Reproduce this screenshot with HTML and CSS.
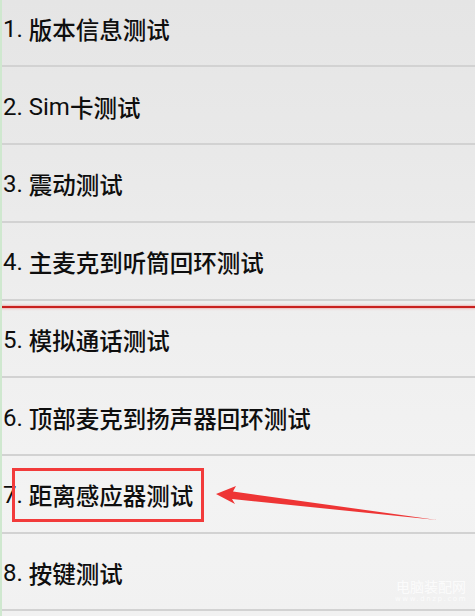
FILE: index.html
```html
<!DOCTYPE html>
<html lang="zh">
<head>
<meta charset="utf-8">
<title>测试列表</title>
<link rel="stylesheet" href="styles.css">
</head>
<body>
<div class="screen">
  <ul class="list">
    <li class="row"><span class="lat">1. </span>版本信息测试</li>
    <li class="row"><span class="lat">2. Sim</span>卡测试</li>
    <li class="row"><span class="lat">3. </span>震动测试</li>
    <li class="row"><span class="lat">4. </span>主麦克到听筒回环测试</li>
    <li class="row"><span class="lat">5. </span>模拟通话测试</li>
    <li class="row"><span class="lat">6. </span>顶部麦克到扬声器回环测试</li>
    <li class="row"><span class="lat">7. </span>距离感应器测试</li>
    <li class="row"><span class="lat">8. </span>按键测试</li>
  </ul>
  <div class="red-line"></div>
  <div class="mark-box"></div>
  <svg class="arrow" width="475" height="616" viewBox="0 0 475 616">
    <polygon points="216,494 236,486 233,491.5 437,520 232,499 235,504" fill="#ee3535"/>
  </svg>
  <div class="watermark">
    <div class="wm-cn">电脑装配网</div>
    <div class="wm-en">www.dnzp.com</div>
  </div>
</div>
</body>
</html>
```
FILE: styles.css
```css
html, body {
  margin: 0;
  padding: 0;
}
body {
  width: 475px;
  height: 616px;
  overflow: hidden;
  font-family: Roboto, "Noto Sans CJK SC", sans-serif;
}
.screen {
  position: relative;
  width: 475px;
  height: 616px;
  overflow: hidden;
  background: linear-gradient(180deg, #e5e5e5 0%, #e9e9e9 25%, #efefef 55%, #f3f3f3 80%, #f1f1f1 100%);
  border-left: 2px solid #cfe8cf;
  box-sizing: border-box;
}
.list {
  list-style: none;
  margin: -10.3px 0 0 0;
  padding: 0;
}
.row {
  height: 77.71px;
  box-sizing: border-box;
  border-bottom: 2px solid #d2d2d2;
  display: flex;
  align-items: center;
  padding: 3px 0 0 1px;
  font-size: 23.5px;
  font-weight: 500;
  color: #0e0e0e;
  white-space: pre;
}
.lat {
  font-weight: 400;
  font-size: 24px;
}
.red-line {
  position: absolute;
  left: 0;
  right: 0;
  top: 306px;
  height: 2px;
  background: #c8201e;
  box-shadow: 0 0 2px 1px rgba(240, 120, 120, 0.45);
}
.mark-box {
  position: absolute;
  left: 10px;
  top: 468px;
  width: 192px;
  height: 54px;
  border: 3px solid #f23b3b;
  box-sizing: border-box;
}
.arrow {
  position: absolute;
  left: -2px;
  top: 0;
}
.watermark {
  position: absolute;
  left: 393px;
  top: 578px;
  color: rgba(255, 255, 255, 0.75);
  text-align: center;
}
.wm-cn {
  font-family: "Noto Sans CJK SC", sans-serif;
  font-size: 14px;
  line-height: 16px;
}
.wm-en {
  font-family: "DejaVu Sans", sans-serif;
  font-size: 7px;
  line-height: 10px;
  letter-spacing: 1.6px;
}
```
